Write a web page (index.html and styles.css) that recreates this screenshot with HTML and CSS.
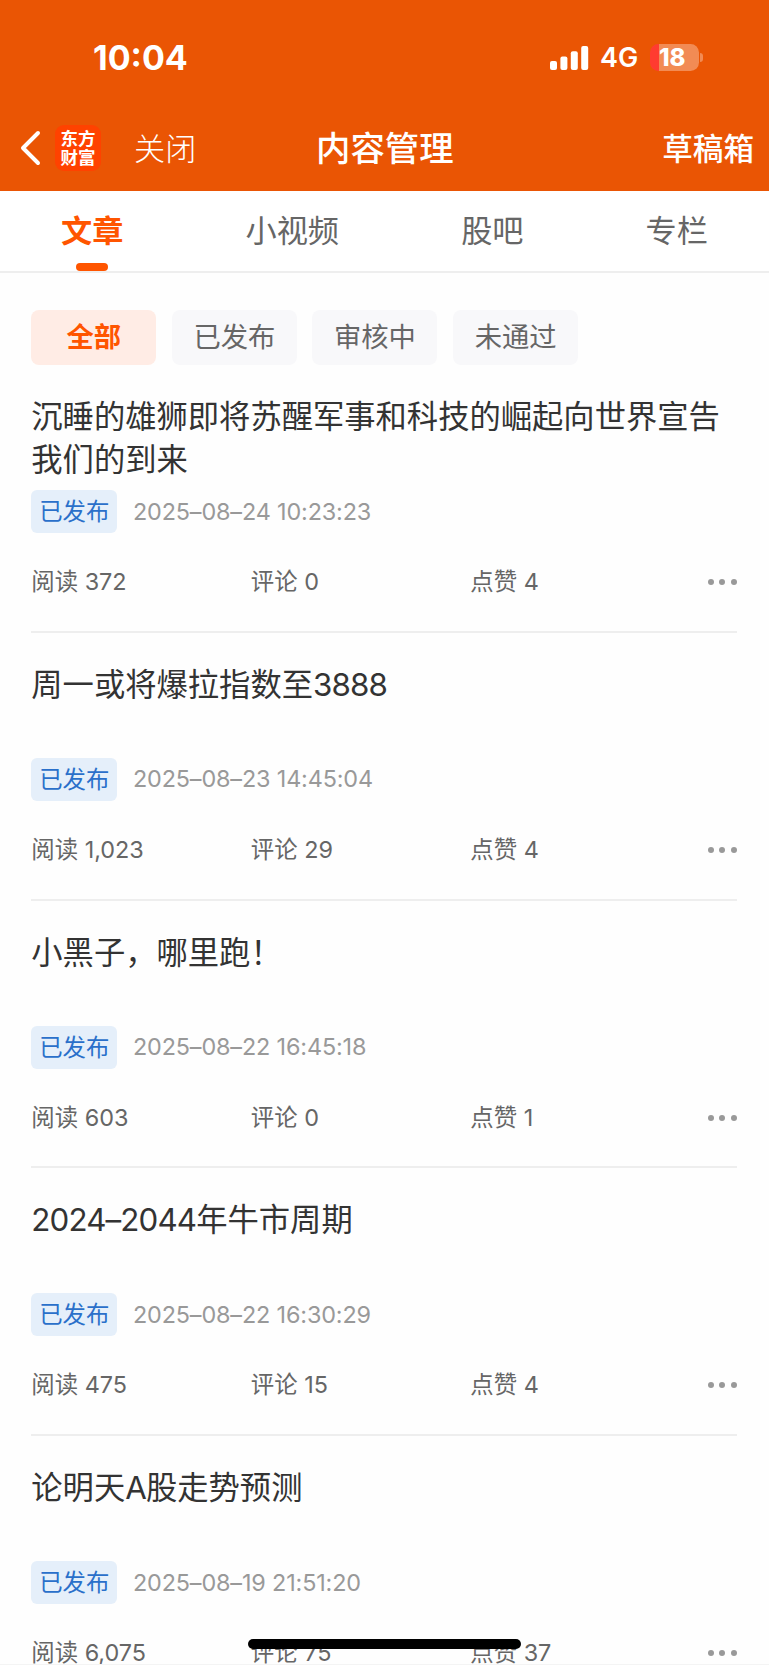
FILE: index.html
```html
<!DOCTYPE html>
<html lang="zh-CN">
<head>
    <meta charset="UTF-8">
    <meta name="viewport" content="width=device-width, initial-scale=1.0">
    <title>内容管理</title>
    <link rel="stylesheet" href="styles.css">
</head>
<body>
    <header class="header">
        <div class="status-bar">
            <span class="time">10:04</span>
            <div class="status-icons">
                <svg class="signal" width="39" height="24" viewBox="0 0 39 24" fill="#fff">
                    <rect x="0" y="15" width="7" height="9" rx="2"/>
                    <rect x="10.4" y="10.4" width="7" height="13.6" rx="2"/>
                    <rect x="20.8" y="5.2" width="7" height="18.8" rx="2"/>
                    <rect x="31.2" y="0" width="7" height="24" rx="2"/>
                </svg>
                <span class="network">4G</span>
                <div class="battery"><span class="battery-text">18</span></div>
                <span class="battery-tip"></span>
            </div>
        </div>
        <nav class="nav-bar">
            <div class="nav-left">
                <svg class="back" width="22" height="36" viewBox="0 0 22 36" fill="none" stroke="#fff" stroke-width="4" stroke-linecap="round" stroke-linejoin="round">
                    <path d="M18 3L3 18l15 15"/>
                </svg>
                <div class="logo"><span>东方</span><span>财富</span></div>
                <span class="close">关闭</span>
            </div>
            <h1 class="page-title">内容管理</h1>
            <span class="drafts">草稿箱</span>
        </nav>
    </header>

    <div class="tabs">
        <div class="tab active">文章</div>
        <div class="tab">小视频</div>
        <div class="tab">股吧</div>
        <div class="tab">专栏</div>
    </div>

    <div class="filters">
        <div class="filter active">全部</div>
        <div class="filter">已发布</div>
        <div class="filter">审核中</div>
        <div class="filter">未通过</div>
    </div>

    <main class="list">
        <article class="item">
            <h2 class="item-title">沉睡的雄狮即将苏醒军事和科技的崛起向世界宣告我们的到来</h2>
            <div class="meta"><span class="badge">已发布</span><span class="date">2025–08–24 10:23:23</span></div>
            <div class="stats">
                <span>阅读 372</span><span>评论 0</span><span>点赞 4</span>
                <div class="more"><i></i><i></i><i></i></div>
            </div>
        </article>
        <article class="item">
            <h2 class="item-title">周一或将爆拉指数至<span class="num">3888</span></h2>
            <div class="meta"><span class="badge">已发布</span><span class="date">2025–08–23 14:45:04</span></div>
            <div class="stats">
                <span>阅读 1,023</span><span>评论 29</span><span>点赞 4</span>
                <div class="more"><i></i><i></i><i></i></div>
            </div>
        </article>
        <article class="item">
            <h2 class="item-title">小黑子，哪里跑！</h2>
            <div class="meta"><span class="badge">已发布</span><span class="date">2025–08–22 16:45:18</span></div>
            <div class="stats">
                <span>阅读 603</span><span>评论 0</span><span>点赞 1</span>
                <div class="more"><i></i><i></i><i></i></div>
            </div>
        </article>
        <article class="item">
            <h2 class="item-title"><span class="num">2024–2044</span>年牛市周期</h2>
            <div class="meta"><span class="badge">已发布</span><span class="date">2025–08–22 16:30:29</span></div>
            <div class="stats">
                <span>阅读 475</span><span>评论 15</span><span>点赞 4</span>
                <div class="more"><i></i><i></i><i></i></div>
            </div>
        </article>
        <article class="item">
            <h2 class="item-title">论明天<span class="num">A</span>股走势预测</h2>
            <div class="meta"><span class="badge">已发布</span><span class="date">2025–08–19 21:51:20</span></div>
            <div class="stats">
                <span>阅读 6,075</span><span>评论 75</span><span>点赞 37</span>
                <div class="more"><i></i><i></i><i></i></div>
            </div>
        </article>
    </main>

    <div class="home-indicator"></div>
</body>
</html>
```

FILE: styles.css
```css
* {
    box-sizing: border-box;
}
body {
    margin: 0;
    height: 1665px;
    overflow: hidden;
    position: relative;
    background-color: #fefefe;
    border-bottom: 1px solid #f4f4f4;
    font-family: Inter, "Noto Sans CJK SC", sans-serif;
    color: #333;
}
.header {
    height: 191px;
    background-color: #ea5504;
    color: #fff;
}
.status-bar {
    height: 105px;
    padding: 10px 66px 0 93px;
    display: flex;
    align-items: center;
    justify-content: space-between;
}
.time {
    font-size: 34px;
    font-weight: 700;
    line-height: 40px;
}
.status-icons {
    display: flex;
    align-items: center;
}
.network {
    margin-left: 11px;
    width: 38px;
    font-size: 27px;
    font-weight: 600;
    line-height: 34px;
}
.battery {
    width: 49px;
    height: 27px;
    margin-left: 12px;
    border-radius: 8.5px;
    background: linear-gradient(to right, #ff3b30 9px, #f28b54 9px);
    display: flex;
    align-items: center;
    padding-left: 9px;
}
.battery-text {
    font-size: 24px;
    font-weight: 800;
    line-height: 27px;
}
.battery-tip {
    width: 3px;
    height: 9px;
    margin-left: 1px;
    border-radius: 0 4px 4px 0;
    background-color: #f28b54;
}
.nav-bar {
    height: 86px;
    padding: 0 15px 0 20px;
    display: grid;
    grid-template-columns: 296px auto 1fr;
    align-items: center;
}
.nav-left {
    display: flex;
    align-items: center;
}
.logo {
    width: 46px;
    height: 46px;
    margin-left: 13px;
    border-radius: 9px;
    background-color: #ff4200;
    display: flex;
    flex-direction: column;
    align-items: center;
    justify-content: center;
    font-size: 17.5px;
    font-weight: 700;
    line-height: 19px;
}
.close {
    margin-left: 33px;
    padding-top: 2px;
    font-size: 31.2px;
    font-weight: 300;
    line-height: 44px;
}
.page-title {
    margin: 0;
    padding-top: 2px;
    font-size: 34.4px;
    font-weight: 500;
    line-height: 44px;
}
.drafts {
    justify-self: end;
    padding-top: 2px;
    font-size: 30.6px;
    font-weight: 500;
    line-height: 44px;
}
.tabs {
    height: 82px;
    border-bottom: 2px solid #eee;
    background-color: #fff;
    display: flex;
    justify-content: space-around;
}
.tab {
    height: 80px;
    display: flex;
    flex-direction: column;
    align-items: center;
    justify-content: space-between;
    padding-top: 18px;
    font-size: 31.2px;
    line-height: 44px;
    color: #666;
}
.tab.active {
    color: #ff5500;
    font-weight: 700;
}
.tab.active::after {
    content: "";
    width: 32px;
    height: 8px;
    border-radius: 4px;
    background-color: #ff5500;
}
.filters {
    display: flex;
    gap: 15.6px;
    padding: 37px 31.3px 0;
}
.filter {
    width: 125px;
    height: 55px;
    border-radius: 8px;
    background-color: #f8f8fa;
    color: #666;
    font-size: 27.3px;
    line-height: 56px;
    text-align: center;
}
.filter.active {
    background-color: #ffece5;
    color: #ff5500;
    font-weight: 700;
}
.list {
    padding: 0 32px 0 31.3px;
}
.item {
    height: 267.75px;
    padding-top: 31px;
    border-bottom: 2px solid #eee;
}
.item-title {
    margin: 0 -4px 0 0;
    height: 86px;
    font-size: 31.3px;
    font-weight: 400;
    line-height: 43px;
}
.num {
    letter-spacing: -0.85px;
}
.meta {
    display: flex;
    align-items: center;
    margin-top: 8px;
}
.badge {
    width: 86px;
    height: 43px;
    border-radius: 6px;
    background-color: #e5effa;
    color: #2a70ca;
    font-size: 23.4px;
    line-height: 43px;
    text-align: center;
}
.date {
    margin-left: 15.6px;
    padding-bottom: 1px;
    font-size: 23.4px;
    letter-spacing: -0.14px;
    color: #999;
}
.stats {
    margin-top: 32px;
    height: 34px;
    display: grid;
    grid-template-columns: 219.5px 219.5px 1fr auto;
    align-items: center;
    font-size: 23.4px;
    line-height: 34px;
    color: #666;
}
.more {
    display: flex;
    gap: 5.7px;
}
.more i {
    width: 6px;
    height: 6px;
    border-radius: 50%;
    background-color: #999;
}
.home-indicator {
    position: absolute;
    left: 248px;
    top: 1639px;
    width: 273px;
    height: 10px;
    border-radius: 5px;
    background-color: #000;
}
```
